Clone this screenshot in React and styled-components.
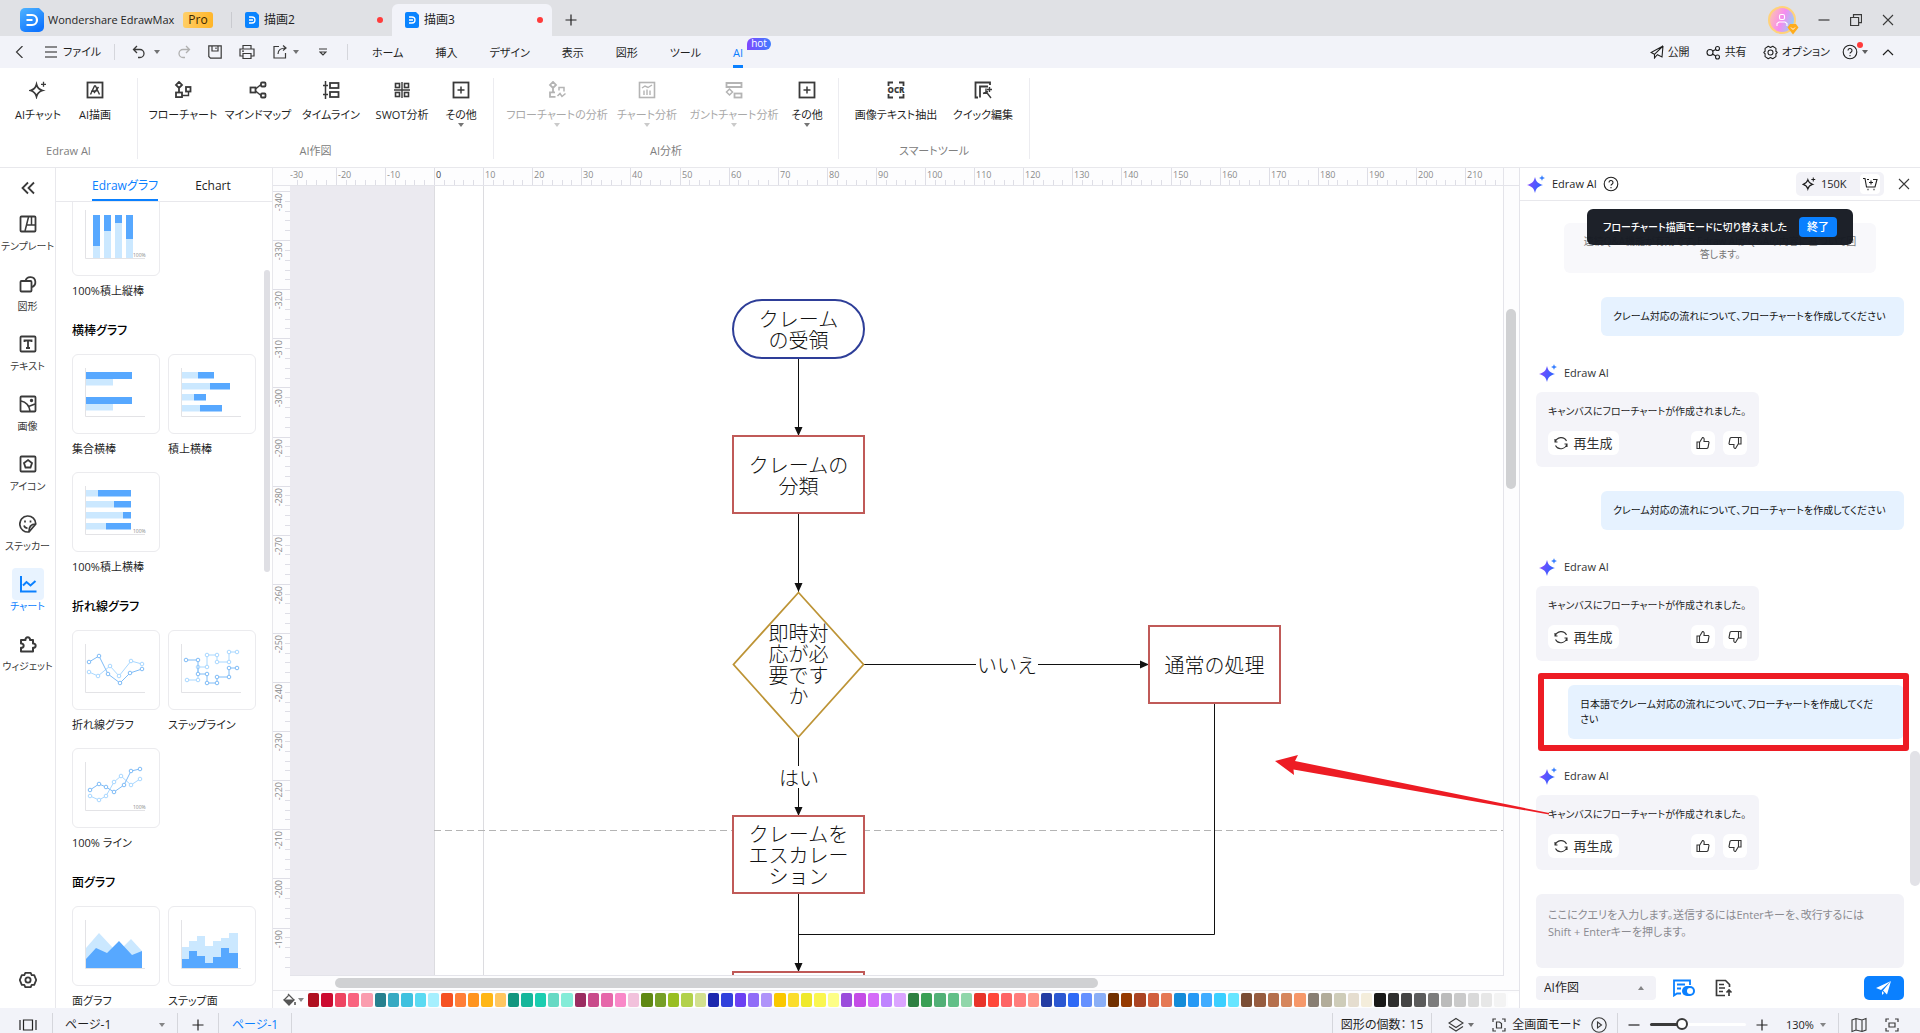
import React, { useState } from 'react';
import styled, { createGlobalStyle, css } from 'styled-components';

const GlobalStyle = createGlobalStyle`
  * {
    box-sizing: border-box;
  }

  body {
    margin: 0;
    overflow: hidden;
    font-family: 'Open Sans', 'Noto Sans CJK JP', sans-serif;
    font-feature-settings: 'palt';
    font-size: 11px;
    line-height: 16px;
    color: #1f1f1f;
  }

  button, select, textarea, input {
    font: inherit;
    font-feature-settings: inherit;
    color: inherit;
    margin: 0;
    padding: 0;
    border: none;
    background: none;
  }

  svg {
    display: block;
    flex: none;
  }
`;

/* ---------- icons ---------- */

const Icon = ({ size = 16, w, h, box, sw = 1.2, color = 'currentColor', children }) => (
  <svg
    width={w || size}
    height={h || size}
    viewBox={box || `0 0 ${w || size} ${h || size}`}
    fill="none"
    stroke={color}
    strokeWidth={sw}
    aria-hidden="true"
  >
    {children}
  </svg>
);

const AppLogo = ({ size, id }) => (
  <svg width={size} height={size} viewBox="0 0 24 24" aria-hidden="true">
    <defs>
      <linearGradient id={id} x1="0" y1="0" x2="0.6" y2="1">
        <stop offset="0" stopColor="#4fb4ff" />
        <stop offset="1" stopColor="#0f75ff" />
      </linearGradient>
    </defs>
    <path d="M5 0h14l5 5v14a5 5 0 0 1-5 5H5a5 5 0 0 1-5-5V5a5 5 0 0 1 5-5z" fill={`url(#${id})`} />
    <path d="M6.500 7H12a5 5 0 0 1 0 10H6.500M6.500 12h6" fill="none" stroke="#fff" strokeWidth="2.200" />
  </svg>
);

const DocLogo = () => (
  <svg width="14" height="16" viewBox="0 0 14 16" aria-hidden="true">
    <path d="M2 0h9l3 3v11a2 2 0 0 1-2 2H2a2 2 0 0 1-2-2V2a2 2 0 0 1 2-2z" fill="#0a84ff" />
    <path d="M4 5h3a3 3 0 0 1 0 6H4M4 8h4" fill="none" stroke="#fff" strokeWidth="1.300" />
  </svg>
);

const Sparkle = () => (
  <svg width="18" height="18" viewBox="0 0 18 18" aria-hidden="true">
    <defs>
      <linearGradient id="spark" x1="0" y1="0" x2="1" y2="0.3">
        <stop offset="0" stopColor="#9146ff" />
        <stop offset="1" stopColor="#2b63ff" />
      </linearGradient>
    </defs>
    <path d="M8 2c1 4.500 3 6.600 8 8-5 1.400-7 3.500-8 8-1-4.500-3-6.600-8-8 5-1.400 7-3.500 8-8z" fill="url(#spark)" />
    <path d="M15 0c.4 1.800 1.200 2.600 3 3-1.800.4-2.600 1.200-3 3-.4-1.800-1.200-2.600-3-3 1.800-.4 2.600-1.200 3-3z" fill="#3b82ff" />
  </svg>
);

const SparkleLine = ({ size = 18, sw = 1.8 }) => (
  <Icon size={size} box="0 0 18 18" sw={sw}>
    <path d="M7.500 3.500c.9 3.300 2.500 5 6 6-3.500 1-5.100 2.700-6 6-.9-3.300-2.500-5-6-6 3.500-1 5.100-2.700 6-6z" />
    <path d="M14.500.8v5M12 3.300h5" strokeWidth="1.300" />
  </Icon>
);

const Caret = ({ up }) => (
  <svg width="6" height="4" viewBox="0 0 6 4" aria-hidden="true">
    <path d={up ? 'M0 4h6L3 0z' : 'M0 0h6L3 4z'} fill="currentColor" opacity=".7" />
  </svg>
);

const HelpIcon = () => (
  <Icon size={16} sw={1.1}>
    <circle cx="8" cy="8" r="6.800" />
    <path d="M6 6.500a2 2 0 1 1 3 1.700c-.7.400-1 .7-1 1.400M8 11v1.200" />
  </Icon>
);

const CloseIcon = ({ size = 12 }) => (
  <Icon size={size} box="0 0 12 12" sw={1.1}>
    <path d="M1 1l10 10M11 1L1 11" />
  </Icon>
);

const PlusIcon = () => (
  <Icon size={12} sw={1.2}>
    <path d="M6 .5v11M.5 6h11" />
  </Icon>
);

const glyph = {
  aiChat: <SparkleLine />,
  aiDraw: (
    <Icon size={18} sw={1.8}>
      <rect x="1.500" y="1.500" width="15" height="15" />
      <path d="M4.500 13.500L8.500 5h1l4 8.500M5 10.500l6.500-1M8 12l4.500-6" strokeWidth="1.400" />
    </Icon>
  ),
  flow: (
    <Icon size={18} sw={1.8}>
      <path d="M5 .9l3 3-3 3-3-3zM5 7v4" />
      <rect x="2" y="11.500" width="6" height="4.600" />
      <rect x="12" y="6" width="4.500" height="4.500" />
      <path d="M14.500 11v3.500H8" strokeWidth="1.400" />
    </Icon>
  ),
  mind: (
    <Icon size={18} sw={1.8}>
      <rect x="1.500" y="6.500" width="5" height="5" />
      <rect x="12" y="1.500" width="4.500" height="4" rx="1" />
      <rect x="12" y="12.500" width="4.500" height="4" rx="1" />
      <path d="M6.500 8L12 3.500M6.500 10l5.500 4.500" strokeWidth="1.500" />
    </Icon>
  ),
  timeline: (
    <Icon size={18} sw={1.8}>
      <path d="M3.500 0v18M1 4.500h5M1 13.500h5" strokeWidth="1.500" />
      <rect x="8" y="2" width="8.500" height="5" />
      <rect x="8" y="11" width="8.500" height="5" />
    </Icon>
  ),
  swot: (
    <Icon size={18} sw={1.6}>
      <rect x="2.500" y="2.500" width="4" height="4" />
      <rect x="11.500" y="2.500" width="4" height="4" />
      <rect x="2.500" y="11.500" width="4" height="4" />
      <rect x="11.500" y="11.500" width="4" height="4" />
      <path d="M9 1v16M1 9h16" strokeWidth="1.400" />
    </Icon>
  ),
  more: (
    <Icon size={18} sw={1.8}>
      <rect x="1.500" y="1.500" width="15" height="15" />
      <path d="M9 5.500v7M5.500 9h7" strokeWidth="1.500" />
    </Icon>
  ),
  flowStat: (
    <Icon size={18} sw={1.8}>
      <path d="M5 .9l3 3-3 3-3-3zM5 7v4M7.500 15.800H2v-4.500h5" />
      <path d="M11 9.500V6.500h5v4M9.500 15l2.500-2.500 2 3 3.500-3" strokeWidth="1.500" />
    </Icon>
  ),
  chartStat: (
    <Icon size={18} sw={1.6}>
      <rect x="1.500" y="1.500" width="15" height="15" />
      <path d="M4 7l3-2 3 1.500L14 4M6 9.500V14M9 8.500V14M12 9.500V14" strokeWidth="1.400" />
    </Icon>
  ),
  gantt: (
    <Icon size={18} sw={1.8}>
      <path d="M1.500 6V2h15v4z" />
      <path d="M4.500 8l3 3-3 3-3-3z" strokeWidth="1.500" />
      <rect x="9.500" y="12.500" width="7" height="4" />
    </Icon>
  ),
  ocr: (
    <Icon size={18} sw={1.8}>
      <path d="M1.500 5V1.500H6M12 1.500h4.500V5M1.500 13v3.500H6M12 16.500h4.500V13" />
      <text x="9" y="12" fontSize="8" fontWeight="800" textAnchor="middle" fill="currentColor" stroke="none">OCR</text>
    </Icon>
  ),
  quick: (
    <Icon size={18} sw={1.8}>
      <path d="M16 4V1.500H1.500v15H4M6 16.500V5.500h8" />
      <path d="M11.500 10l5.500 7M9 12.500l5-2M12 7.500v4M15.500 6v5M13 8.500h5" strokeWidth="1.400" />
    </Icon>
  ),
  template: (
    <Icon size={18} sw={1.8}>
      <rect x="1.500" y="1.500" width="15" height="15" rx="1" />
      <path d="M9.500 2L6 16M8 10h8.500M12.500 2v8" strokeWidth="1.500" />
    </Icon>
  ),
  shapes: (
    <Icon size={18} sw={1.8}>
      <rect x="1.500" y="6" width="11" height="10.500" rx="1" />
      <path d="M6.500 6a5 5 0 1 1 6 6" />
    </Icon>
  ),
  text: (
    <Icon size={18} sw={1.8}>
      <rect x="1.500" y="1.500" width="15" height="15" rx="1" />
      <path d="M5.500 7V5.500h7V7M9 5.500v7.500M7 13h4" />
    </Icon>
  ),
  image: (
    <Icon size={18} sw={1.8}>
      <rect x="1.500" y="1.500" width="15" height="15" rx="1" />
      <path d="M2 6c5 1 8 4 9 10M9.500 11.500L16 9" strokeWidth="1.600" />
      <circle cx="12.500" cy="5.500" r=".8" />
    </Icon>
  ),
  icons: (
    <Icon size={18} sw={1.8}>
      <rect x="1.500" y="1.500" width="15" height="15" rx="1" />
      <path d="M9 5l4 3-1.500 4.500h-5L5 8z" />
    </Icon>
  ),
  sticker: (
    <Icon size={18} sw={1.7}>
      <path d="M16.800 9A8 8 0 1 0 10 16.900z" />
      <path d="M16.800 9c-5 0-7 3-6.800 7.900M5 10.500c.6 1.800 2 2.700 3.500 2.700" />
      <path d="M6 5.500v2M11.500 5.500v2" />
    </Icon>
  ),
  chart: (
    <Icon size={18} sw={2}>
      <path d="M2 1v15.500h15.500" />
      <path d="M4 10.500L7.500 7l4 3.500L16.500 6" />
    </Icon>
  ),
  widget: (
    <Icon size={18} sw={2}>
      <path d="M2 5h4.500a2.300 2.300 0 1 1 4.500 0H14v3.500a2.200 2.200 0 1 1 0 4.300V16.500H2v-3.700a2.200 2.200 0 1 0 0-4.300z" strokeLinejoin="round" />
    </Icon>
  ),
  gear: (
    <Icon size={18} sw={1.8}>
      <path d="M6.300 1.800h5.400l1 2.400h2.500L17.200 9l-2 4.800h-2.500l-1 2.400H6.300l-1-2.400H2.800L.8 9l2-4.800h2.500z" strokeLinejoin="round" />
      <circle cx="9" cy="9" r="2.600" />
    </Icon>
  ),
};

/* ---------- page frame ---------- */

const Page = styled.div`
  display: flex;
  flex-direction: column;
  height: 100vh;
  overflow: hidden;
  background: #fff;
`;

const TitleBar = styled.header`
  display: flex;
  align-items: center;
  height: 36px;
  flex: none;
  padding: 4px 16px 0 20px;
  background: #e0e1e5;
`;

const Brand = styled.div`
  display: flex;
  align-items: center;
  gap: 4px;
  width: 212px;
  height: 16px;
  border-right: 1px solid #c9cacf;
`;

const ProBadge = styled.span`
  margin-left: 5px;
  padding: 0 5px;
  border-radius: 3px;
  background: linear-gradient(100deg, #ffd06a, #ffb426);
  font-size: 12px;
  color: #3a2500;
`;

const DocTab = styled.button`
  display: flex;
  align-items: center;
  gap: 5px;
  width: 160px;
  height: 32px;
  padding: 0 9px 0 13px;
  border-radius: 6px 6px 0 0;
  text-align: left;
  background: ${props => (props.$active ? '#f2f3f9' : 'transparent')};
  font-size: 12px;

  span {
    flex: 1;
  }
`;

const RedDot = styled.i`
  width: 6px;
  height: 6px;
  border-radius: 50%;
  background: #ff3b3b;
`;

const IconButton = styled.button`
  display: flex;
  align-items: center;
  justify-content: center;
  gap: ${props => props.$gap || 0}px;
  width: ${props => props.$w || 32}px;
  height: 24px;
  flex: none;
  margin-left: ${props => props.$ml || 0}px;
  margin-right: ${props => props.$mr || 0}px;
  color: ${props => props.$color || '#3a3a3a'};
`;

const Spacer = styled.div`
  flex: 1;
`;

const Avatar = styled.div`
  position: relative;
  display: flex;
  align-items: center;
  justify-content: center;
  width: 28px;
  height: 28px;
  margin-right: 12px;
  border: 2px solid #ffd27a;
  border-radius: 50%;
  background: linear-gradient(110deg, #ffc9a8, #f58bf0 50%, #7be3f5);
  color: #fff;
`;

const Gem = styled.span`
  position: absolute;
  right: -5px;
  bottom: -3px;
`;

const MenuBar = styled.nav`
  display: flex;
  align-items: center;
  height: 32px;
  flex: none;
  padding: 0 24px 0 4px;
  background: #f2f3f9;
`;

const FileButton = styled.button`
  display: flex;
  align-items: center;
  gap: 6px;
  width: 78px;
  padding-left: 9px;
`;

const Divider = styled.span`
  width: 1px;
  height: ${props => props.$h || 16}px;
  flex: none;
  background: #d5d6dc;
`;

const MenuTabs = styled.div`
  display: flex;
  gap: 32px;
  height: 32px;
  padding-left: 24px;
`;

const MenuTab = styled.button`
  position: relative;
  height: 32px;
  padding-top: 2px;
  color: ${props => (props.$active ? '#0a80ff' : '#1f1f1f')};

  ${props => props.$active && css`
    box-shadow: inset 0 -3px 0 #0a80ff;
  `}
`;

const HotBadge = styled.span`
  position: absolute;
  left: 14px;
  top: 2px;
  width: 24px;
  height: 12px;
  border-radius: 6px 6px 6px 0;
  background: linear-gradient(90deg, #7f47ff, #3f7dff);
  color: #fff;
  font-size: 10px;
  line-height: 11px;
`;

const MenuAction = styled.button`
  position: relative;
  display: flex;
  align-items: center;
  gap: 4px;
  margin-left: ${props => (props.$tight ? 12 : 16)}px;
`;

const CornerDot = styled(RedDot)`
  position: absolute;
  left: 15px;
  top: -2px;
`;

const Ribbon = styled.div`
  display: flex;
  height: 100px;
  flex: none;
  padding: 10px 0 8px;
  border-bottom: 1px solid #e8e8ec;
`;

const RibbonGroup = styled.section`
  display: flex;
  flex-direction: column;
  justify-content: space-between;
  width: ${props => props.$w}px;
  padding: 3px 8px 0;
  border-right: 1px solid #ececf0;
`;

const RibbonItems = styled.div`
  display: flex;
`;

const RibbonButton = styled.button`
  display: flex;
  flex-direction: column;
  align-items: center;
  width: ${props => props.$w}px;
  flex: none;
  color: ${props => (props.disabled ? '#b4b4b4' : '#3a3a3a')};

  span {
    margin-top: 8px;
    color: ${props => (props.disabled ? '#a8a8a8' : '#1f1f1f')};
    white-space: nowrap;
  }
`;

const GroupName = styled.div`
  text-align: center;
  color: #808080;
`;

const Body = styled.div`
  display: flex;
  flex: 1;
  min-height: 0;
`;

/* ---------- left side ---------- */

const Rail = styled.aside`
  display: flex;
  flex-direction: column;
  width: 56px;
  flex: none;
  border-right: 1px solid #e8e8ec;
  color: #3a3a3a;
`;

const RailCollapse = styled.button`
  display: flex;
  align-items: center;
  justify-content: center;
  height: 40px;
`;

const RailItem = styled.button`
  display: flex;
  flex-direction: column;
  align-items: center;
  height: 60px;
  white-space: nowrap;
  font-size: 10px;
  line-height: 12px;
  color: ${props => (props.$active ? '#0a80ff' : '#3a3a3a')};
`;

const RailSettings = styled(RailItem)`
  height: 44px;
`;

const RailIcon = styled.span`
  display: flex;
  align-items: center;
  justify-content: center;
  width: 32px;
  height: 32px;
  border-radius: 4px;
  background: ${props => (props.$active ? '#e8f3ff' : 'transparent')};
`;

const ChartPanel = styled.aside`
  display: flex;
  flex-direction: column;
  width: 217px;
  flex: none;
  border-right: 1px solid #e8e8ec;
`;

const PanelTabs = styled.div`
  display: flex;
  gap: 37px;
  height: 34px;
  flex: none;
  padding-left: 36px;
  border-bottom: 1px solid #e8e8ec;
`;

const PanelTab = styled.button`
  padding-top: 2px;
  font-size: 12px;
  color: ${props => (props.$active ? '#0a80ff' : '#1f1f1f')};
  box-shadow: ${props => (props.$active ? 'inset 0 -2px 0 #0a80ff' : 'none')};
`;

const PanelScroll = styled.div`
  position: relative;
  flex: 1;
  min-height: 0;
  overflow: hidden;
`;

const PanelList = styled.div`
  margin-top: -6px;
  padding: 0 16px;
`;

const PanelThumb = styled.div`
  position: absolute;
  top: 68px;
  right: 2px;
  width: 6px;
  height: 302px;
  border-radius: 3px;
  background: #dfdfe4;
`;

const PanelHeading = styled.h3`
  height: 40px;
  margin: 0;
  font-size: 12px;
  font-weight: 500;
  line-height: 34px;
  color: #000;
`;

const CardGrid = styled.div`
  display: grid;
  grid-template-columns: 88px 88px;
  gap: 0 8px;
`;

const Card = styled.figure`
  height: 118px;
  margin: 0;
`;

const CardFrame = styled.div`
  height: 80px;
  border: 1px solid #ebebee;
  border-radius: 6px;
`;

const CardName = styled.figcaption`
  line-height: 30px;
  white-space: nowrap;
`;

const dark = '#57a8ff';
const pale = '#cbe8ff';

const Thumb = ({ pct, children }) => (
  <CardFrame>
    <svg width="86" height="78" viewBox="1 1 86 78" aria-hidden="true">
      <path d="M13.500 14v48.500H73" fill="none" stroke="#e3e3e6" />
      {children}
      {pct && <text x="61" y="61" fontSize="5" fill="#888">100%</text>}
    </svg>
  </CardFrame>
);

const toPoints = pts => pts.map(p => p.join(',')).join(' ');

const DotLine = ({ pts, stroke }) => (
  <g fill="#fff" stroke={stroke}>
    <polyline points={toPoints(pts)} fill="none" />
    {pts.map(([x, y]) => (
      <circle key={`${x}-${y}`} cx={x} cy={y} r="1.800" />
    ))}
  </g>
);

const StackRow = ({ y, a, b }) => (
  <g>
    <rect x="14" y={y} width={a - 14} height="6.500" fill={pale} />
    <rect x={a} y={y} width={b - a} height="6.500" fill={dark} />
  </g>
);

const chartSections = [
  {
    title: null,
    items: [
      {
        name: '100%積上縦棒',
        pct: true,
        draw: [[21, 50], [32, 35], [43, 27], [54, 43]].map(([x, y]) => (
          <g key={x}>
            <rect x={x} y="19" width="7" height={y - 19} fill={dark} />
            <rect x={x} y={y} width="7" height={62 - y} fill={pale} />
          </g>
        )),
      },
    ],
  },
  {
    title: '横棒グラフ',
    items: [
      {
        name: '集合横棒',
        draw: [18, 43].map(y => (
          <g key={y}>
            <rect x="14" y={y} width="46" height="7" fill={dark} />
            <rect x="14" y={y + 7} width="27" height="6.500" fill={pale} />
          </g>
        )),
      },
      {
        name: '積上横棒',
        draw: [[18, 30, 46], [29, 42, 62], [40, 26, 38], [51, 32, 54]].map(([y, a, b]) => (
          <StackRow key={y} y={y} a={a} b={b} />
        )),
      },
      {
        name: '100%積上横棒',
        pct: true,
        draw: [[18, 26], [29, 42], [40, 51], [51, 34]].map(([y, a]) => (
          <StackRow key={y} y={y} a={a} b={59} />
        )),
      },
    ],
  },
  {
    title: '折れ線グラフ',
    items: [
      {
        name: '折れ線グラフ',
        draw: (
          <>
            <DotLine stroke="#a9d8ff" pts={[[17, 42], [26, 46], [38, 36], [47, 46], [59, 31], [70, 34]]} />
            <DotLine stroke="#7fbcf7" pts={[[17, 32], [27, 26], [36, 44], [48, 53], [58, 43], [70, 39]]} />
          </>
        ),
      },
      {
        name: 'ステップライン',
        draw: (
          <>
            <DotLine stroke="#a9d8ff" pts={[[19, 50], [30, 50], [30, 37], [39, 37], [39, 25], [49, 25], [49, 32], [61, 32], [61, 22], [69, 22]]} />
            <DotLine stroke="#7fbcf7" pts={[[18, 30], [30, 30], [30, 44], [39, 44], [39, 53], [49, 53], [49, 47], [61, 47], [61, 38], [69, 38]]} />
          </>
        ),
      },
      {
        name: '100% ライン',
        pct: true,
        draw: (
          <>
            <DotLine stroke="#a9d8ff" pts={[[18, 48], [27, 52], [34, 48], [42, 34], [49, 28], [59, 37], [68, 31]]} />
            <DotLine stroke="#7fbcf7" pts={[[18, 42], [27, 36], [34, 39], [42, 44], [52, 37], [59, 23], [68, 21]]} />
          </>
        ),
      },
    ],
  },
  {
    title: '面グラフ',
    items: [
      {
        name: '面グラフ',
        draw: (
          <>
            <path d="M14 42L27 27l14 15 9 0 9-9 11 12v17H14z" fill={pale} />
            <path d="M14 53l10-11 11 5 12-12 13 14 10-4v17H14z" fill={dark} />
          </>
        ),
      },
      {
        name: 'ステップ面',
        draw: (
          <>
            <path d="M14 62V41h7v-6h8v-5h8v10h8v-5h8v-3h8v-5h9v35z" fill={pale} />
            <path d="M14 62v-9h7v-8h8v5h8v7h8v-6h8v-9h8v5h9v15z" fill={dark} />
          </>
        ),
      },
    ],
  },
];

/* ---------- canvas ---------- */

const Workspace = styled.main`
  display: grid;
  grid-template-columns: 17px minmax(0, 1fr) 15px;
  grid-template-rows: 18px minmax(0, 1fr) 15px 17px;
  flex: 1;
  min-width: 0;
  background: #fdfdfe;
`;

const RulerCorner = styled.div`
  border-bottom: 1px solid #e4e4ea;
`;

const RulerTop = styled.div`
  overflow: hidden;
  border-bottom: 1px solid #e4e4ea;
  border-right: 1px solid #e4e4ea;
`;

const RulerLeft = styled.div`
  overflow: hidden;
`;

const Canvas = styled.div`
  position: relative;
  overflow: hidden;
  background: #ebeaf0;
  border-right: 1px solid #e4e4ea;
  border-bottom: 1px solid #e4e4ea;
`;

const Sheet = styled.div`
  position: absolute;
  inset: 0 0 0 144px;
  background: #fff;
  border-left: 1px solid #dcdce0;
`;

const Connectors = styled.svg`
  position: absolute;
  left: 0;
  top: 0;
  width: 100%;
  height: 100%;
`;

const nodeTypes = {
  start: css`
    border: 2px solid #2e3e98;
    border-radius: 30px;
  `,
  process: css`
    border: 2px solid #c05a58;
  `,
  decision: css`
    background: none;
  `,
};

const Node = styled.div`
  position: absolute;
  left: ${props => props.$x}px;
  top: ${props => props.$y}px;
  width: ${props => props.$w}px;
  height: ${props => props.$h}px;
  display: flex;
  align-items: center;
  justify-content: center;
  background: #fff;
  font-family: 'Noto Sans CJK JP', sans-serif;
  font-feature-settings: normal;
  font-size: 20px;
  font-weight: 300;
  line-height: 21px;
  text-align: center;
  white-space: pre;
  color: #111;
  ${props => nodeTypes[props.$type]}
`;

const VScroll = styled.div`
  padding: 123px 2px 0;
`;

const VThumb = styled.div`
  height: 180px;
  width: 10px;
  border-radius: 5px;
  background: #d0d1d3;
`;

const HScroll = styled.div`
  grid-column: 1 / -1;
  padding: 2px 421px 2px 62px;
  border-bottom: 1px solid #e8e8ec;
`;

const HThumb = styled.div`
  height: 10px;
  border-radius: 5px;
  background: #d0d1d3;
`;

const Palette = styled.div`
  grid-column: 1 / -1;
  display: flex;
  align-items: center;
  gap: 2px;
`;

const FillButton = styled.button`
  display: flex;
  align-items: center;
  gap: 2px;
  width: 33px;
  padding-left: 10px;
  color: #555;
`;

const Swatch = styled.button`
  flex: 1;
  height: 14px;
  border-radius: 2px;
  background: ${props => props.$color};
`;

const swatches = `
  b01020 cc0a30 ee4562 f9637f fa9cae 26808f 36a9c2 3fc1df 5bdaf2 a6effe
  f55123 ff7e38 ff941f ffb616 ffc660 12967f 15b69b 1bcdb0 66d9c4 84ecd8
  9b2c61 c94b8b e667aa f988c8 f2c1dc 5f8813 769f27 98be22 b2d14b d2e08e
  1d27ae 3140dc 6c41f2 906cf8 af93fa fac800 fbdd2c efe92c faf650 fdfe87
  9b4cdc c44ce6 d46af8 bf83ff dba4ff 2e8042 3aa055 52b077 62bf88 90d6aa
  e8342a ff473a fe6465 ff7c7c ff9288 243ca3 2b57d1 2e69f6 6590ff 8aaef6
  713000 953900 aa4424 d15f3e e57854 148bd8 2699f5 40acff 3bcfff 66e5ff
  7a4d35 965c40 b56f4d d6865d f6986a 887e73 b2ac9a ceccb9 e5ddcf f4eddb
  181818 2e2e2e 444444 5b5b5b 7c7c7c bbbbbb cacaca d9d9d9 e7e7e7 f3f3f3 ffffff
`.trim().split(/\s+/);

const nodes = [
  { type: 'start', x: 442, y: 113, w: 133, h: 60, label: 'クレーム\nの受領' },
  { type: 'process', x: 442, y: 249, w: 133, h: 79, label: 'クレームの\n分類' },
  { type: 'decision', x: 442, y: 405, w: 133, h: 146, label: '即時対\n応が必\n要です\nか' },
  { type: 'process', x: 858, y: 439, w: 133, h: 79, label: '通常の処理' },
  { type: 'process', x: 442, y: 629, w: 133, h: 79, label: 'クレームを\nエスカレー\nション' },
  { type: 'process', x: 442, y: 785, w: 133, h: 79, label: '' },
  { type: 'label', x: 686, y: 467, w: 62, h: 22, label: 'いいえ' },
  { type: 'label', x: 486, y: 580, w: 46, h: 22, label: 'はい' },
];

// One ruler step is 10 mm, split into five minor ticks
const STEP = 49.1;

const TopRuler = () => (
  <svg width="1230" height="17" aria-hidden="true">
    {Array.from({ length: 25 }, (_, i) => i - 3).map(n => {
      const x = Math.round(144 + n * STEP);
      return (
        <g key={n} stroke="#dedee6">
          <path d={`M${x + 0.5} 0v17`} />
          {[1, 2, 3, 4].map(k => (
            <path key={k} d={`M${Math.round(144 + n * STEP + (k * STEP) / 5) + 0.5} 12v5`} />
          ))}
          <text x={n === -3 ? 0 : x + 2} y="10" fontSize="9" fill={n === 0 ? '#444' : '#8a8a8a'} stroke="none">{n * 10}</text>
        </g>
      );
    })}
  </svg>
);

const SideRuler = () => (
  <svg width="17" height="792" aria-hidden="true">
    {Array.from({ length: 16 }, (_, n) => {
      const y = Math.round(5 + n * STEP);
      return (
        <g key={n} stroke="#dedee6">
          <path d={`M0 ${y + 0.5}h17`} />
          {[1, 2, 3, 4].map(k => (
            <path key={k} d={`M12 ${Math.round(5 + n * STEP + (k * STEP) / 5) + 0.5}h5`} />
          ))}
          <text transform={`translate(9 ${y + 2}) rotate(-90)`} textAnchor="end" fontSize="9" fill="#8a8a8a" stroke="none">
            {n * 10 - 340}
          </text>
        </g>
      );
    })}
  </svg>
);

const ArrowDown = ({ x, y }) => <path d={`M${x - 4} ${y - 9}h8l-4 9z`} fill="#111" stroke="none" />;

const Flowchart = () => (
  <Canvas>
    <Sheet />
    <Connectors aria-hidden="true">
      <path d="M193.500 0V1000" stroke="#dcdce0" />
      <path d="M144 644.500H2000" stroke="#b4b4b4" strokeDasharray="7 4" />
      <g fill="none" stroke="#111">
        <path d="M508.500 172V249M508.500 328V406M508.500 551V629M508.500 708V785" />
        <path d="M574 478.500H858M924.500 518V748.500H508.500" />
      </g>
      <ArrowDown x={508.5} y={250} />
      <ArrowDown x={508.5} y={406} />
      <ArrowDown x={508.5} y={630} />
      <ArrowDown x={508.5} y={786} />
      <path d="M850 474.500v8l9-4z" fill="#111" />
      <path d="M508.500 406.500L573.500 478.500 508.500 551 443.500 478.500z" fill="#fff" stroke="#bd9436" strokeWidth="1.800" />
    </Connectors>
    {nodes.map(n => (
      <Node key={`${n.x}-${n.y}`} $type={n.type} $x={n.x} $y={n.y} $w={n.w} $h={n.h}>{n.label}</Node>
    ))}
  </Canvas>
);

/* ---------- AI panel ---------- */

const AiPanel = styled.aside`
  position: relative;
  display: flex;
  flex-direction: column;
  width: 401px;
  flex: none;
  border-left: 1px solid #e4e4ea;
`;

const AiHeader = styled.header`
  display: flex;
  align-items: center;
  height: 33px;
  flex: none;
  padding: 0 4px 0 7px;
  border-bottom: 1px solid #e8e8ec;
`;

const AiTitle = styled.h2`
  margin: 0 6px 0 7px;
  font-size: 11px;
  font-weight: 500;
`;

const Credits = styled.div`
  display: flex;
  align-items: center;
  gap: 5px;
  width: 88px;
  height: 24px;
  margin-right: 8px;
  padding: 2px 4px 2px 6px;
  border-radius: 5px;
  background: #f2f2f7;
`;

const CartButton = styled.button`
  display: flex;
  align-items: center;
  justify-content: center;
  width: 20px;
  height: 20px;
  margin-left: auto;
  border-radius: 4px;
  background: #fff;
`;

const ChatLog = styled.div`
  position: relative;
  display: flex;
  flex-direction: column;
  justify-content: flex-end;
  flex: 1;
  min-height: 0;
  padding: 0 16px;
`;

const ChatThumb = styled.div`
  position: absolute;
  right: 0;
  bottom: 8px;
  width: 10px;
  height: 135px;
  border-radius: 5px;
  background: #e2e2e7;
`;

const Notice = styled.p`
  align-self: center;
  width: 312px;
  margin: 0 0 24px;
  padding: 12px;
  border-radius: 6px;
  background: #f8f8fb;
  text-align: center;
  font-size: 10px;
  line-height: 13px;
  white-space: pre-line;
  color: #777;
`;

const Toast = styled.div`
  position: absolute;
  left: 67px;
  top: 8px;
  display: flex;
  align-items: center;
  justify-content: space-between;
  width: 266px;
  height: 36px;
  padding: 0 16px;
  border-radius: 6px;
  background: rgba(22, 26, 34, 0.97);
  color: #fff;
  font-size: 10px;
  font-weight: 500;
  white-space: nowrap;
`;

const EndButton = styled.button`
  width: 38px;
  height: 20px;
  border-radius: 4px;
  background: #0a80ff;
  color: #fff;
  font-size: 11px;
`;

const UserBubble = styled.div`
  position: relative;
  align-self: flex-end;
  width: ${props => (props.$wide ? 336 : 303)}px;
  padding: 12px;
  border-radius: 6px;
  background: #e6f2ff;
  font-size: 10px;
  line-height: 15px;
  white-space: pre-line;
  color: #111;
`;

const RedFrame = styled.span`
  position: absolute;
  inset: -12px -5px -12px -30px;
  border: 6px solid #ed1c24;
  border-radius: 3px;
`;

const Sender = styled.div`
  display: flex;
  align-items: center;
  gap: 7px;
  height: 24px;
  margin: 25px 0 7px;
  padding-left: 3px;
  color: #333;
`;

const Reply = styled.div`
  align-self: flex-start;
  width: 223px;
  height: 75px;
  margin-bottom: 24px;
  padding: 12px;
  border-radius: 6px;
  background: #f4f4f9;
  font-size: 10px;
  line-height: 15px;
`;

const ReplyActions = styled.div`
  display: flex;
  gap: 8px;
  margin-top: 12px;
`;

const WhiteButton = styled.button`
  display: flex;
  align-items: center;
  justify-content: center;
  gap: 5px;
  width: ${props => props.$w || 24}px;
  height: 24px;
  border-radius: 6px;
  background: #fff;
  font-size: 13px;
  color: #333;
`;

const Composer = styled.form`
  flex: none;
  padding: 0 16px 8px;
`;

const QueryBox = styled.textarea`
  display: block;
  width: 100%;
  height: 74px;
  padding: 12px;
  border-radius: 6px;
  background: #f2f2f7;
  font-size: 11px;
  line-height: 17px;
  resize: none;

  &::placeholder {
    color: #8a8a90;
  }
`;

const ComposerRow = styled.div`
  display: flex;
  align-items: center;
  margin-top: 8px;
`;

const SelectWrap = styled.label`
  position: relative;
  display: flex;
  align-items: center;
  width: ${props => props.$w}px;
  height: 24px;
  flex: none;
  border-radius: 4px;
  background: ${props => props.$bg || 'transparent'};
  color: #555;

  select {
    width: 100%;
    height: 100%;
    padding-left: ${props => props.$pad || 8}px;
    appearance: none;
    font-size: ${props => props.$fs || 12}px;
    color: #1f1f1f;
  }

  svg {
    position: absolute;
    right: 12px;
    pointer-events: none;
  }
`;

const SendButton = styled.button`
  display: flex;
  align-items: center;
  justify-content: center;
  width: 40px;
  height: 24px;
  margin-left: auto;
  border-radius: 5px;
  background: #0a80ff;
`;

const RedArrow = styled.svg`
  position: absolute;
  left: -246px;
  bottom: 190px;
  pointer-events: none;
`;

const Answer = () => (
  <>
    <Sender><Sparkle />Edraw AI</Sender>
    <Reply>
      キャンバスにフローチャートが作成されました。
      <ReplyActions>
        <WhiteButton $w={71}>
          <Icon size={14} sw={1.1}>
            <path d="M1 3v3h2.500M1.300 6A6 6 0 0 1 12.500 5M13 11V8h-2.500M12.700 8A6 6 0 0 1 1.500 9.500" />
          </Icon>
          再生成
        </WhiteButton>
        <Spacer />
        <WhiteButton aria-label="高評価">
          <Icon size={14} sw={1.1}>
            <path d="M1 6h2.500v6.500H1zM3.500 6.500L6.500 1.500c1.500 0 2 1 1.500 4h4.500l.5.8-1 5.400-1 .8H3.500" />
          </Icon>
        </WhiteButton>
        <WhiteButton aria-label="低評価">
          <Icon size={14} sw={1.1}>
            <path d="M13 8h-2.500V1.500H13zM10.500 7.500L7.500 12.500c-1.500 0-2-1-1.500-4H1.500L1 7.700l1-5.400 1-.8h7.500" />
          </Icon>
        </WhiteButton>
      </ReplyActions>
    </Reply>
  </>
);

const AiChat = () => {
  const [query, setQuery] = useState('');

  return (
    <AiPanel>
      <AiHeader>
        <Sparkle />
        <AiTitle>Edraw AI</AiTitle>
        <HelpIcon />
        <Spacer />
        <Credits>
          <SparkleLine size={14} sw={1.4} />
          150K
          <CartButton aria-label="購入">
            <Icon size={16} sw={1.1}>
              <path d="M1 2.500h2l1.500 8.500h8.500L15 3.500h-4M5 3.500h2M9 4.500v4M7 6.500h4" />
              <path d="M5.500 13.500h1M11.500 13.500h1" strokeWidth="1.500" />
            </Icon>
          </CartButton>
        </Credits>
        <IconButton $w={24} aria-label="閉じる"><CloseIcon /></IconButton>
      </AiHeader>
      <ChatLog>
        <Notice>{'連続Q&A機能が有効です。Edraw AIがQ&Aの内容に基づいて回\n答します。'}</Notice>
        <UserBubble>クレーム対応の流れについて、フローチャートを作成してください</UserBubble>
        <Answer />
        <UserBubble>クレーム対応の流れについて、フローチャートを作成してください</UserBubble>
        <Answer />
        <UserBubble $wide>
          {'日本語でクレーム対応の流れについて、フローチャートを作成してくだ\nさい'}
          <RedFrame />
        </UserBubble>
        <Answer />
        <ChatThumb />
        <Toast>
          フローチャート描画モードに切り替えました
          <EndButton>終了</EndButton>
        </Toast>
      </ChatLog>
      <Composer onSubmit={e => e.preventDefault()}>
        <QueryBox
          aria-label="クエリ"
          value={query}
          onChange={e => setQuery(e.target.value)}
          placeholder={'ここにクエリを入力します。送信するにはEnterキーを、改行するには\nShift + Enterキーを押します。'}
        />
        <ComposerRow>
          <SelectWrap $w={120} $bg="#f2f2f7">
            <select aria-label="モード"><option>AI作図</option></select>
            <Caret up />
          </SelectWrap>
          <IconButton type="button" $w={56} $color="#0a80ff" aria-label="連続会話">
            <Icon w={22} h={18} sw={1.8}>
              <path d="M8 14.500H4l-3 2V1.500h16V6M4 5.500h8M4 9.500h4" />
              <rect x="9" y="7" width="13" height="10" rx="5" fill="currentColor" stroke="none" />
              <circle cx="17" cy="12" r="3" fill="#fff" stroke="none" />
            </Icon>
          </IconButton>
          <IconButton type="button" $w={24} $color="#3a3a3a" aria-label="ファイルを追加">
            <Icon size={18} sw={1.7}>
              <path d="M10 16.500H1.500v-15h9l4 4V8M4 5.500h5M4 9h6M4 12.500h4" />
              <path d="M14 17v-6M11.500 13.500L14 11l2.500 2.500" />
            </Icon>
          </IconButton>
          <SendButton aria-label="送信">
            <svg width="16" height="16" viewBox="0 0 16 16" aria-hidden="true">
              <path d="M15 1L0 8l5 2zM15 1L7 10.500l4 4z" fill="#fff" />
              <path d="M6 11v4l2-2z" fill="#fff" />
            </svg>
          </SendButton>
        </ComposerRow>
      </Composer>
      <RedArrow width="276" height="66" viewBox="0 0 276 66" aria-hidden="true">
        <path d="M1 9L24 3l-3 6L275 61v1.500L19.500 17.500l.5 5.500z" fill="#ed1c24" />
      </RedArrow>
    </AiPanel>
  );
};

/* ---------- status bar ---------- */

const StatusBar = styled.footer`
  height: 25px;
  flex: none;
  overflow: hidden;
  background: #f2f3f9;
`;

const StatusRow = styled.div`
  display: flex;
  align-items: center;
  height: 33px;
  padding-right: 15px;
  font-size: 12px;
`;

const PageTab = styled.button`
  width: 72px;
  color: #0a80ff;
`;

const StatusText = styled.span`
  padding: 0 ${props => (props.$flush ? 0 : 8)}px;
  white-space: nowrap;
`;

const ZoomSlider = styled.input`
  appearance: none;
  width: 96px;
  height: 12px;
  margin: 0 10px;

  &::-webkit-slider-runnable-track {
    height: 3px;
    border-radius: 2px;
    background: linear-gradient(90deg, #3a3a3a 33%, #fff 33%);
  }

  &::-webkit-slider-thumb {
    appearance: none;
    width: 12px;
    height: 12px;
    margin-top: -5px;
    border: 2px solid #3a3a3a;
    border-radius: 50%;
    background: #fff;
  }
`;

const Status = () => {
  const [zoom, setZoom] = useState(31);

  return (
    <StatusBar>
      <StatusRow>
        <IconButton $w={48} $ml={4} $color="#222" aria-label="ページ一覧">
          <Icon w={18} h={12} sw={1.2} box="0 0 18 12">
            <path d="M1 1v10M17 1v10M4.500 1h9v10h-9z" />
          </Icon>
        </IconButton>
        <Divider $h={24} />
        <SelectWrap $w={124} $pad={12}>
          <select aria-label="ページ"><option>ページ-1</option></select>
          <Caret />
        </SelectWrap>
        <Divider $h={24} />
        <IconButton $w={40} $color="#222" aria-label="ページを追加"><PlusIcon /></IconButton>
        <Divider $h={24} />
        <PageTab>ページ-1</PageTab>
        <Divider $h={24} />
        <Spacer />
        <Divider $h={24} />
        <StatusText>図形の個数： 15</StatusText>
        <Divider $h={24} />
        <IconButton $w={50} $gap={4} $ml={4} aria-label="レイヤー">
          <Icon size={16} sw={1.1}>
            <path d="M8 1.500l7 4.500-7 4.500L1 6zM1 9.500l7 4.500 7-4.500" />
          </Icon>
          <Caret />
        </IconButton>
        <IconButton $w={26} aria-label="フォーカス">
          <Icon size={14} sw={1.2}>
            <path d="M1 4V1h3M10 1h3v3M1 10v3h3M10 13h3v-3M4.500 4h3l2 1.500V10h-5z" />
          </Icon>
        </IconButton>
        <StatusText $flush>全画面モード</StatusText>
        <IconButton $w={36} aria-label="再生">
          <Icon size={16} sw={1.1}>
            <circle cx="8" cy="8" r="7.200" />
            <path d="M6.500 5l4 3-4 3z" />
          </Icon>
        </IconButton>
        <Divider $h={24} />
        <IconButton $w={12} $ml={10} $color="#222" aria-label="縮小">
          <Icon size={12}><path d="M.5 6h11" /></Icon>
        </IconButton>
        <ZoomSlider
          type="range"
          aria-label="ズーム"
          value={zoom}
          onChange={e => setZoom(Number(e.target.value))}
        />
        <IconButton $w={12} $color="#222" aria-label="拡大"><PlusIcon /></IconButton>
        <SelectWrap $w={70} $pad={18} $fs={11}>
          <select aria-label="倍率"><option>130%</option></select>
          <Caret />
        </SelectWrap>
        <Divider $h={24} />
        <IconButton $w={40} aria-label="マップ">
          <Icon size={16} sw={1.1}>
            <path d="M1 3l4-1.500L11 3l4-1.500v11.500l-4 1.500-6-1.500-4 1.500zM5 1.500V13M11 3v11.500" />
          </Icon>
        </IconButton>
        <IconButton $w={26} aria-label="全体表示">
          <Icon size={14} sw={1.2}>
            <path d="M1 4V1h3M10 1h3v3M1 10v3h3M10 13h3v-3M4 5h6v4H4z" />
          </Icon>
        </IconButton>
      </StatusRow>
    </StatusBar>
  );
};

/* ---------- top area ---------- */

const ribbonGroups = [
  {
    name: 'Edraw AI',
    w: 138,
    items: [
      { label: 'AIチャット', icon: glyph.aiChat, w: 60 },
      { label: 'AI描画', icon: glyph.aiDraw, w: 54 },
    ],
  },
  {
    name: 'AI作図',
    w: 356,
    items: [
      { label: 'フローチャート', icon: glyph.flow, w: 74 },
      { label: 'マインドマップ', icon: glyph.mind, w: 76 },
      { label: 'タイムライン', icon: glyph.timeline, w: 70 },
      { label: 'SWOT分析', icon: glyph.swot, w: 72 },
      { label: 'その他', icon: glyph.more, w: 46, menu: true },
    ],
  },
  {
    name: 'AI分析',
    w: 345,
    items: [
      { label: 'フローチャートの分析', icon: glyph.flowStat, w: 110, menu: true, off: true },
      { label: 'チャート分析', icon: glyph.chartStat, w: 70, menu: true, off: true },
      { label: 'ガントチャート分析', icon: glyph.gantt, w: 104, menu: true, off: true },
      { label: 'その他', icon: glyph.more, w: 42, menu: true },
    ],
  },
  {
    name: 'スマートツール',
    w: 191,
    items: [
      { label: '画像テキスト抽出', icon: glyph.ocr, w: 98 },
      { label: 'クイック編集', icon: glyph.quick, w: 76 },
    ],
  },
];

const railItems = [
  ['テンプレート', glyph.template],
  ['図形', glyph.shapes],
  ['テキスト', glyph.text],
  ['画像', glyph.image],
  ['アイコン', glyph.icons],
  ['ステッカー', glyph.sticker],
  ['チャート', glyph.chart],
  ['ウィジェット', glyph.widget],
];

const Header = () => (
  <>
    <TitleBar>
      <Brand>
        <AppLogo size={24} id="brand" />
        Wondershare EdrawMax
        <ProBadge>Pro</ProBadge>
      </Brand>
      <DocTab><DocLogo /><span>描画2</span><RedDot /></DocTab>
      <DocTab $active><DocLogo /><span>描画3</span><RedDot /></DocTab>
      <IconButton $w={38} $color="#222" aria-label="新規タブ"><PlusIcon /></IconButton>
      <Spacer />
      <Avatar>
        <Icon size={14} sw={1.1}>
          <rect x="4.500" y="1.500" width="5" height="5" rx="1.500" />
          <path d="M2 13v-2.500l2-1.500h6l2 1.500V13" />
        </Icon>
        <Gem>
          <svg width="12" height="12" viewBox="0 0 12 12" aria-hidden="true">
            <path d="M3 1h6l2.500 3.500L6 11.500.5 4.500z" fill="#ffac1c" />
            <path d="M4 4.500l2 2 2-2" fill="none" stroke="#fff" />
          </svg>
        </Gem>
      </Avatar>
      <IconButton aria-label="最小化"><Icon size={12}><path d="M.5 6h11" /></Icon></IconButton>
      <IconButton aria-label="元のサイズ"><Icon size={12}><path d="M.6 3.500h8v8h-8zM3.500 3.500V.6h8v8H8.600" /></Icon></IconButton>
      <IconButton aria-label="閉じる"><CloseIcon /></IconButton>
    </TitleBar>
    <MenuBar>
      <IconButton aria-label="戻る"><Icon size={12}><path d="M8.500 0L2.500 6l6 6" /></Icon></IconButton>
      <FileButton>
        <Icon size={12}><path d="M0 1h12M0 6h12M0 11h12" /></Icon>
        ファイル
      </FileButton>
      <Divider />
      <IconButton $w={62} $gap={8} aria-label="元に戻す">
        <Icon size={14} sw={1.3}><path d="M5 1L1.500 4.500 5 8M1.500 4.500H8a4 4 0 0 1 0 8H6" /></Icon>
        <Caret />
      </IconButton>
      <IconButton $w={14} $color="#b0b0b0" aria-label="やり直し">
        <Icon size={14} sw={1.3}><path d="M9 1l3.500 3.500L9 8M12.500 4.500H6a4 4 0 0 0 0 8h2" /></Icon>
      </IconButton>
      <IconButton $w={48} aria-label="保存">
        <Icon size={14} sw={1.2}><path d="M.8.8h12.400v12.400H2.500L.8 11.500zM4 1v5h6V1M8 2.500V4" /></Icon>
      </IconButton>
      <IconButton $w={16} aria-label="印刷">
        <Icon size={16} sw={1.2}><path d="M4 5V1.500h8V5M4 12H1V5h14v7h-3M4 9.500h8v5H4zM3 7.200h2" /></Icon>
      </IconButton>
      <IconButton $w={62} $gap={6} aria-label="エクスポート">
        <Icon size={14} sw={1.2}><path d="M6 1.500H1v11.500h11.500V8M5 9c0-4 3-6 8-6M10 .5L13 3l-3 2.500" /></Icon>
        <Caret />
      </IconButton>
      <IconButton $w={12} $mr={18} aria-label="カスタマイズ">
        <Icon size={8} sw={1.2}><path d="M0 1h8M1 4l3 3 3-3z" /></Icon>
      </IconButton>
      <Divider />
      <MenuTabs>
        {['ホーム', '挿入', 'デザイン', '表示', '図形', 'ツール'].map(t => <MenuTab key={t}>{t}</MenuTab>)}
        <MenuTab $active>AI<HotBadge>hot</HotBadge></MenuTab>
      </MenuTabs>
      <Spacer />
      <MenuAction>
        <Icon size={14} sw={1.1}><path d="M13 1L1 7.500l3.500 1.800zM13 1l-1 11-5-2.500M4.500 9.300V13l2.500-3" /></Icon>
        公開
      </MenuAction>
      <MenuAction>
        <Icon size={15} sw={1.1}>
          <circle cx="4" cy="7.500" r="3" />
          <circle cx="11.500" cy="3.500" r="2" />
          <circle cx="11.500" cy="12" r="2" />
          <path d="M6.800 6L9.700 4.400M6.500 9l3.300 2" />
        </Icon>
        共有
      </MenuAction>
      <MenuAction>
        <Icon size={15} box="0 0 18 18" sw={1.3}>
          <path d="M6.300 1.500L9 3l2.700-1.500L15.500 4v3.500L17 9l-1.500 1.500V14l-3.800 2.500L9 15l-2.700 1.500L2.500 14v-3.500L1 9l1.500-1.500V4z" strokeLinejoin="round" />
          <circle cx="9" cy="9" r="3" />
        </Icon>
        オプション
      </MenuAction>
      <MenuAction $tight aria-label="ヘルプ">
        <HelpIcon />
        <Caret />
        <CornerDot />
      </MenuAction>
      <MenuAction $tight aria-label="リボンを折りたたむ">
        <Icon size={16}><path d="M3 11l5-5 5 5" /></Icon>
      </MenuAction>
    </MenuBar>
    <Ribbon>
      {ribbonGroups.map(g => (
        <RibbonGroup key={g.name} $w={g.w}>
          <RibbonItems>
            {g.items.map(item => (
              <RibbonButton key={item.label} $w={item.w} disabled={item.off}>
                {item.icon}
                <span>{item.label}</span>
                {item.menu && <Caret />}
              </RibbonButton>
            ))}
          </RibbonItems>
          <GroupName>{g.name}</GroupName>
        </RibbonGroup>
      ))}
    </Ribbon>
  </>
);

const Sidebar = () => (
  <>
    <Rail>
      <RailCollapse aria-label="折りたたむ">
        <Icon size={14} sw={1.8}><path d="M7 1.500L1.500 7 7 12.500M13 1.500L7.500 7l5.500 5.500" /></Icon>
      </RailCollapse>
      {railItems.map(([label, icon]) => (
        <RailItem key={label} $active={label === 'チャート'}>
          <RailIcon $active={label === 'チャート'}>{icon}</RailIcon>
          {label}
        </RailItem>
      ))}
      <Spacer />
      <RailSettings aria-label="設定"><RailIcon>{glyph.gear}</RailIcon></RailSettings>
    </Rail>
    <ChartPanel>
      <PanelTabs>
        <PanelTab $active>Edrawグラフ</PanelTab>
        <PanelTab>Echart</PanelTab>
      </PanelTabs>
      <PanelScroll>
        <PanelList>
          {chartSections.map(s => (
            <section key={s.title || 'top'}>
              {s.title && <PanelHeading>{s.title}</PanelHeading>}
              <CardGrid>
                {s.items.map(c => (
                  <Card key={c.name}>
                    <Thumb pct={c.pct}>{c.draw}</Thumb>
                    <CardName>{c.name}</CardName>
                  </Card>
                ))}
              </CardGrid>
            </section>
          ))}
        </PanelList>
        <PanelThumb />
      </PanelScroll>
    </ChartPanel>
  </>
);

export default function App() {
  return (
    <Page>
      <GlobalStyle />
      <Header />
      <Body>
        <Sidebar />
        <Workspace>
          <RulerCorner />
          <RulerTop><TopRuler /></RulerTop>
          <RulerCorner as="span" />
          <RulerLeft><SideRuler /></RulerLeft>
          <Flowchart />
          <VScroll><VThumb /></VScroll>
          <HScroll><HThumb /></HScroll>
          <Palette>
            <FillButton aria-label="塗りつぶし">
              <Icon size={13} sw={1.2}>
                <path d="M5 1l6 6-5 5-5-5 4.500-4.500" />
                <path d="M1.500 7h9l-4.500 4.800z" fill="currentColor" />
                <path d="M12 9v3" strokeWidth="1.600" />
              </Icon>
              <Caret />
            </FillButton>
            {swatches.map(c => <Swatch key={c} $color={`#${c}`} aria-label={`#${c}`} />)}
          </Palette>
        </Workspace>
        <AiChat />
      </Body>
      <Status />
    </Page>
  );
}
